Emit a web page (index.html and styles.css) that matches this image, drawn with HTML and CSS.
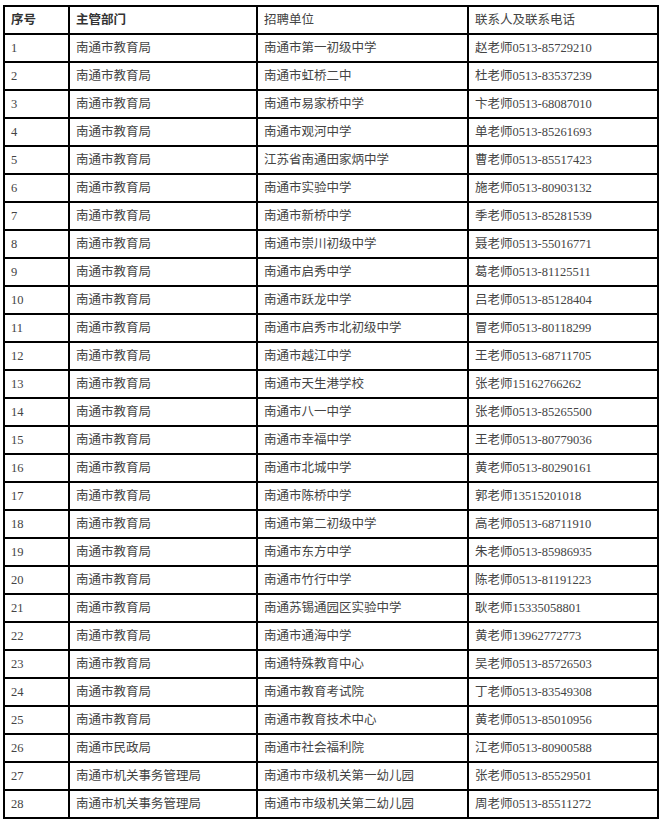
FILE: index.html
```html
<!DOCTYPE html>
<html lang="zh-CN">
<head>
<meta charset="utf-8">
<title>招聘单位联系表</title>
<link rel="stylesheet" href="styles.css">
</head>
<body>
<table class="list">
<colgroup><col class="c1"><col class="c2"><col class="c3"><col class="c4"></colgroup>
<thead>
<tr><th>序号</th><th>主管部门</th><th class="light">招聘单位</th><th class="light">联系人及联系电话</th></tr>
</thead>
<tbody>
<tr><td>1</td><td>南通市教育局</td><td>南通市第一初级中学</td><td>赵老师0513-85729210</td></tr>
<tr><td>2</td><td>南通市教育局</td><td>南通市虹桥二中</td><td>杜老师0513-83537239</td></tr>
<tr><td>3</td><td>南通市教育局</td><td>南通市易家桥中学</td><td>卞老师0513-68087010</td></tr>
<tr><td>4</td><td>南通市教育局</td><td>南通市观河中学</td><td>单老师0513-85261693</td></tr>
<tr><td>5</td><td>南通市教育局</td><td>江苏省南通田家炳中学</td><td>曹老师0513-85517423</td></tr>
<tr><td>6</td><td>南通市教育局</td><td>南通市实验中学</td><td>施老师0513-80903132</td></tr>
<tr><td>7</td><td>南通市教育局</td><td>南通市新桥中学</td><td>季老师0513-85281539</td></tr>
<tr><td>8</td><td>南通市教育局</td><td>南通市崇川初级中学</td><td>聂老师0513-55016771</td></tr>
<tr><td>9</td><td>南通市教育局</td><td>南通市启秀中学</td><td>葛老师0513-81125511</td></tr>
<tr><td>10</td><td>南通市教育局</td><td>南通市跃龙中学</td><td>吕老师0513-85128404</td></tr>
<tr><td>11</td><td>南通市教育局</td><td>南通市启秀市北初级中学</td><td>冒老师0513-80118299</td></tr>
<tr><td>12</td><td>南通市教育局</td><td>南通市越江中学</td><td>王老师0513-68711705</td></tr>
<tr><td>13</td><td>南通市教育局</td><td>南通市天生港学校</td><td>张老师15162766262</td></tr>
<tr><td>14</td><td>南通市教育局</td><td>南通市八一中学</td><td>张老师0513-85265500</td></tr>
<tr><td>15</td><td>南通市教育局</td><td>南通市幸福中学</td><td>王老师0513-80779036</td></tr>
<tr><td>16</td><td>南通市教育局</td><td>南通市北城中学</td><td>黄老师0513-80290161</td></tr>
<tr><td>17</td><td>南通市教育局</td><td>南通市陈桥中学</td><td>郭老师13515201018</td></tr>
<tr><td>18</td><td>南通市教育局</td><td>南通市第二初级中学</td><td>高老师0513-68711910</td></tr>
<tr><td>19</td><td>南通市教育局</td><td>南通市东方中学</td><td>朱老师0513-85986935</td></tr>
<tr><td>20</td><td>南通市教育局</td><td>南通市竹行中学</td><td>陈老师0513-81191223</td></tr>
<tr><td>21</td><td>南通市教育局</td><td>南通苏锡通园区实验中学</td><td>耿老师15335058801</td></tr>
<tr><td>22</td><td>南通市教育局</td><td>南通市通海中学</td><td>黄老师13962772773</td></tr>
<tr><td>23</td><td>南通市教育局</td><td>南通特殊教育中心</td><td>吴老师0513-85726503</td></tr>
<tr><td>24</td><td>南通市教育局</td><td>南通市教育考试院</td><td>丁老师0513-83549308</td></tr>
<tr><td>25</td><td>南通市教育局</td><td>南通市教育技术中心</td><td>黄老师0513-85010956</td></tr>
<tr><td>26</td><td>南通市民政局</td><td>南通市社会福利院</td><td>江老师0513-80900588</td></tr>
<tr><td>27</td><td>南通市机关事务管理局</td><td>南通市市级机关第一幼儿园</td><td>张老师0513-85529501</td></tr>
<tr><td>28</td><td>南通市机关事务管理局</td><td>南通市市级机关第二幼儿园</td><td>周老师0513-85511272</td></tr>
</tbody>
</table>
</body>
</html>
```
FILE: styles.css
```css
html, body {
  margin: 0;
  background: #fff;
}
body {
  padding: 5px 0 0 3px;
  font-family: "Liberation Serif", "Noto Sans CJK SC", serif;
  font-size: 12.5px;
  color: #444;
}
.list {
  border-collapse: collapse;
  width: 654px;
  table-layout: fixed;
}
.c1 { width: 65px; }
.c2 { width: 188px; }
.c3 { width: 211px; }
.c4 { width: 190px; }
.list th,
.list td {
  border: 2px solid #000;
  height: 26px;
  padding: 0 6px;
  text-align: left;
  vertical-align: middle;
  white-space: nowrap;
  line-height: 16px;
}
.list th {
  font-weight: bold;
  color: #333;
}
.list th.light {
  font-weight: normal;
  color: #444;
}
```
